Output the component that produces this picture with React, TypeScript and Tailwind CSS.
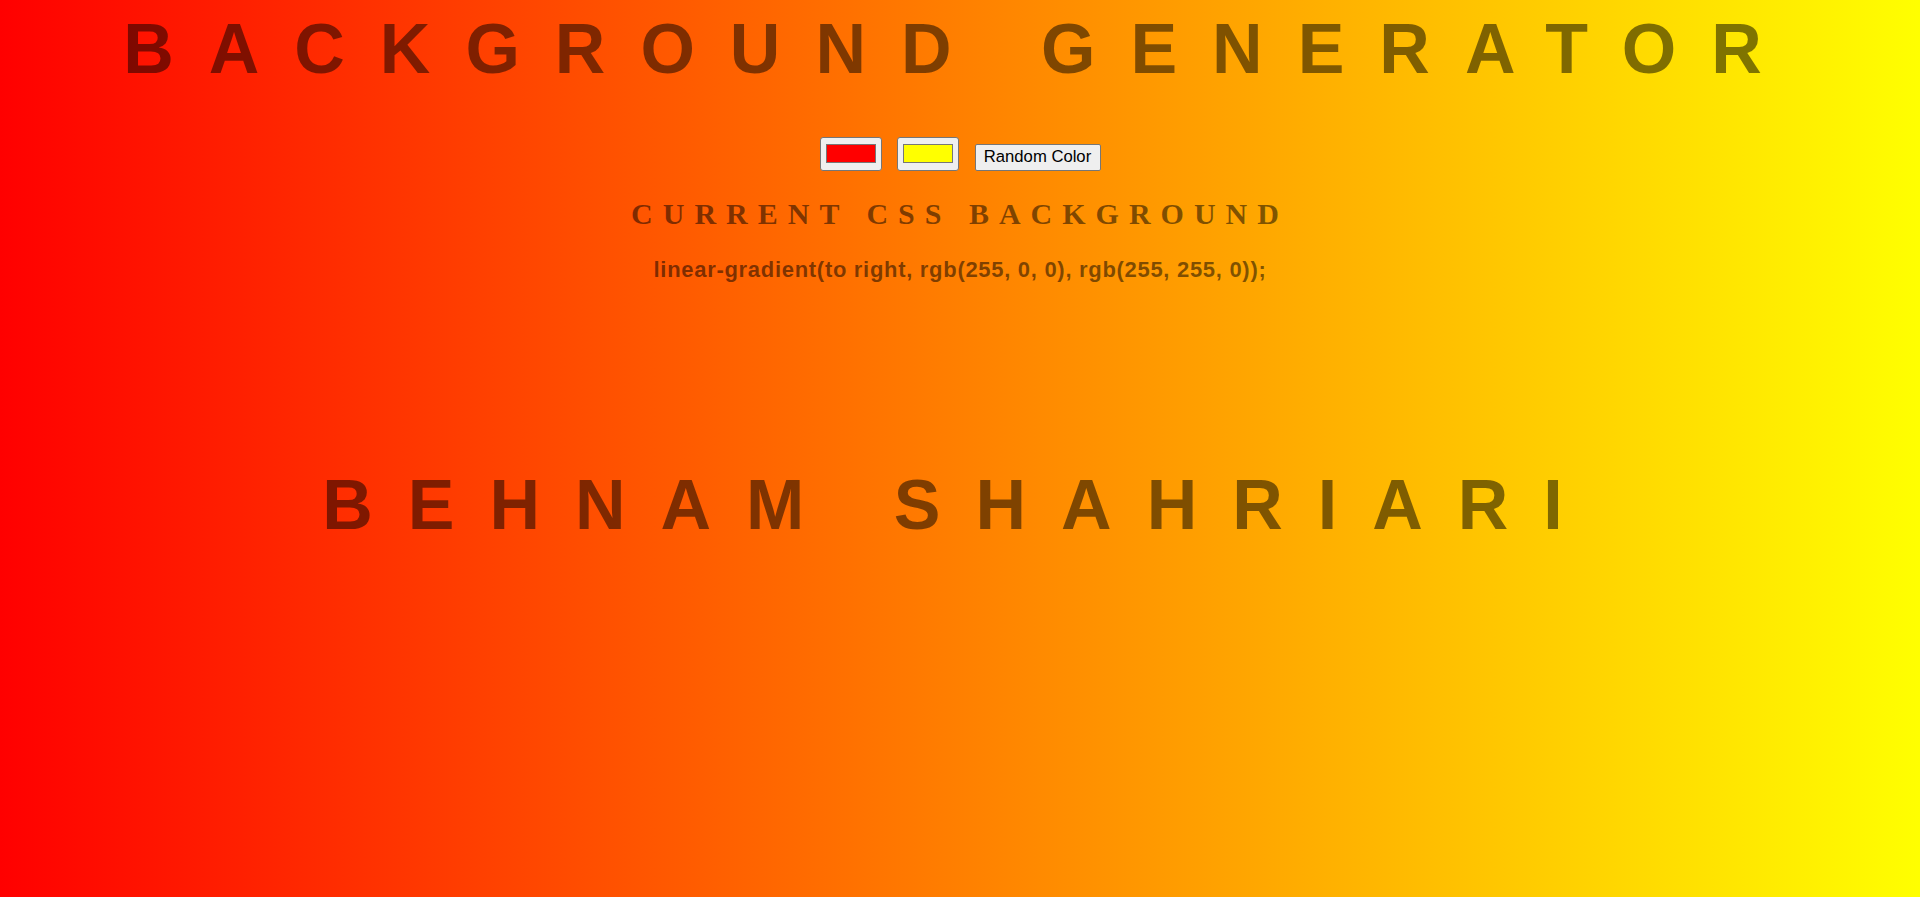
import React from "react";

function ColorSwatch({ color }: { color: string }) {
  return (
    <div className="flex h-[34px] w-[62px] items-center justify-center rounded-[3px] border border-[#767676] bg-[#efefef]">
      <div
        className="h-[19px] w-[50px] border-[1.5px] border-[#777777]"
        style={{ backgroundColor: color }}
      />
    </div>
  );
}

export default function App() {
  return (
    <div
      className="flex min-h-screen w-full flex-col items-center bg-[linear-gradient(to_right,#ff0000,#ffff00)] text-center text-[rgba(0,0,0,0.5)]"
      style={{ fontFamily: '"Liberation Sans", Arial, sans-serif' }}
    >
      <h1 className="mt-[8.5px] w-full text-[70px] font-bold leading-[80px] tracking-[35px]">
        BACKGROUND GENERATOR
      </h1>

      <div className="mt-[48px] flex items-start justify-center gap-[15.5px]">
        <ColorSwatch color="#ff0000" />
        <ColorSwatch color="#ffff00" />
        <button className="mt-[7px] h-[27.5px] w-[126px] rounded-[2px] border border-[#767676] bg-[#efefef] text-[16.67px] leading-none text-black">
          Random Color
        </button>
      </div>

      <h3
        className="mt-[24.5px] w-full text-[30px] font-bold leading-[36px] tracking-[10px]"
        style={{ fontFamily: '"Liberation Serif", "Times New Roman", serif' }}
      >
        CURRENT CSS BACKGROUND
      </h3>

      <h3 className="mt-[26.3px] w-full text-[22px] font-bold leading-[24px] tracking-[0.7px]">
        linear-gradient(to right, rgb(255, 0, 0), rgb(255, 255, 0));
      </h3>

      <h1 className="mt-[183px] w-full text-[70px] font-bold leading-[80px] tracking-[35px]">
        BEHNAM SHAHRIARI
      </h1>
    </div>
  );
}
